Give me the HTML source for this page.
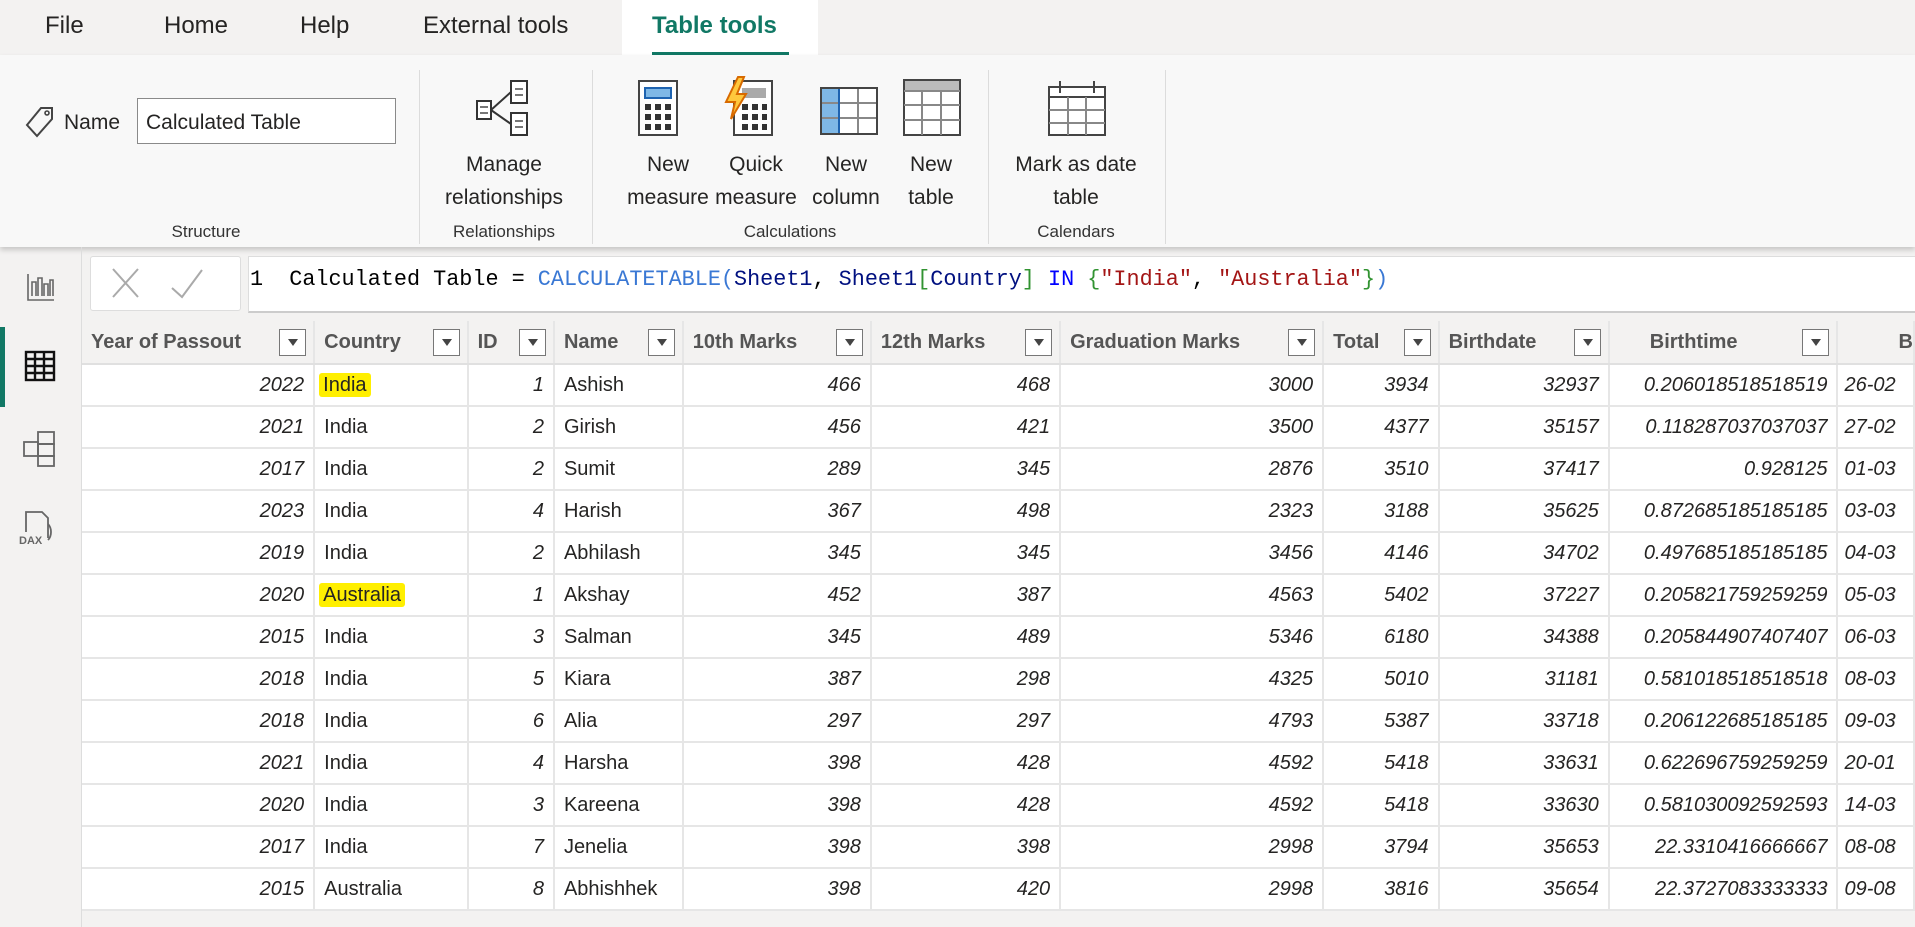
<!DOCTYPE html>
<html><head><meta charset="utf-8"><style>
*{box-sizing:border-box;margin:0;padding:0}
body{width:1915px;height:927px;overflow:hidden;background:#f3f2f1;font-family:"Liberation Sans",sans-serif;color:#252423;position:relative}
.a{position:absolute}
.tab{position:absolute;top:12px;font-size:24px;color:#252423}
.ribbon{position:absolute;left:0;top:55px;width:1915px;height:192px;background:#f8f8f8;box-shadow:0 3px 5px rgba(0,0,0,.18)}
.sep{position:absolute;top:70px;width:1px;height:174px;background:#dcdcdc}
.glabel{position:absolute;top:222px;font-size:17px;color:#333;transform:translateX(-50%);white-space:nowrap}
.blabel{position:absolute;top:148px;font-size:21px;line-height:33px;text-align:center;transform:translateX(-50%);white-space:nowrap;color:#252423}
table{position:absolute;left:82px;top:321px;border-collapse:collapse;table-layout:fixed;background:#fff}
th{height:43px;background:#f3f2f1;font-weight:bold;font-size:20px;color:#555;text-align:left;padding-left:9px;border-right:2px solid #e6e6e6;border-bottom:2px solid #e0e0e0;position:relative;white-space:nowrap;overflow:hidden}
th .dd{position:absolute;right:7px;top:8px;width:27px;height:27px;border:1.5px solid #777;background:#fff}
th .dd:after{content:"";position:absolute;left:8px;top:9px;border-left:5px solid transparent;border-right:5px solid transparent;border-top:7px solid #444}
td{height:42px;font-size:20px;border-right:2px solid #e6e6e6;border-bottom:2px solid #e6e6e6;padding:0 9px;white-space:nowrap;overflow:hidden;color:#252423}
td.n{text-align:right;font-style:italic}
.hl{background:#ffef00;padding:1px 4px;margin-left:-5px;border-radius:3px}
</style></head><body>
<div class="a" style="left:622px;top:0;width:196px;height:55px;background:#fff"></div>
<div class="tab" style="left:45px">File</div>
<div class="tab" style="left:164px">Home</div>
<div class="tab" style="left:300px">Help</div>
<div class="tab" style="left:423px">External tools</div>
<div class="tab" style="left:652px;color:#117865;font-weight:bold">Table tools</div>
<div class="a" style="left:652px;top:52px;width:137px;height:4px;background:#117865"></div>
<div class="ribbon"></div>
<svg class="a" style="left:24px;top:105px" width="32" height="34" viewBox="0 0 32 34"><path d="M3 20 L17 3 L28 3 L28 14 L13 31 Z" fill="none" stroke="#444" stroke-width="2"/><circle cx="23" cy="8" r="2" fill="none" stroke="#444" stroke-width="1.6"/></svg>
<div class="a" style="left:64px;top:111px;font-size:21px">Name</div>
<div class="a" style="left:137px;top:98px;width:259px;height:46px;background:#fff;border:1.5px solid #8a8a8a;font-size:21px;padding:12px 8px">Calculated Table</div>
<div class="sep" style="left:419px"></div><div class="sep" style="left:592px"></div><div class="sep" style="left:988px"></div><div class="sep" style="left:1165px"></div>
<!-- icons -->
<svg class="a" style="left:475px;top:79px" width="62" height="58" viewBox="0 0 62 58"><g fill="#fff" stroke="#333" stroke-width="2"><rect x="2" y="22" width="14" height="18"/><rect x="36" y="2" width="16" height="22"/><rect x="36" y="34" width="16" height="22"/></g><path d="M16 31 L36 13 M16 31 L36 45" stroke="#333" stroke-width="2"/><g stroke="#777" stroke-width="2"><path d="M5 28h8M5 34h8M40 10h8M40 16h8M40 42h8M40 48h8"/></g></svg>
<svg class="a" style="left:638px;top:80px" width="40" height="56" viewBox="0 0 40 56"><rect x="1" y="1" width="38" height="54" fill="#fff" stroke="#444" stroke-width="2"/><rect x="7" y="8" width="26" height="10" fill="#7fb8e6" stroke="#1e63b0" stroke-width="2"/><g fill="#333"><rect x="7" y="24" width="6" height="6"/><rect x="17" y="24" width="6" height="6"/><rect x="27" y="24" width="6" height="6"/><rect x="7" y="34" width="6" height="6"/><rect x="17" y="34" width="6" height="6"/><rect x="27" y="34" width="6" height="6"/><rect x="7" y="44" width="6" height="6"/><rect x="17" y="44" width="6" height="6"/><rect x="27" y="44" width="6" height="6"/></g></svg>
<svg class="a" style="left:722px;top:76px" width="52" height="60" viewBox="0 0 52 60"><rect x="12" y="5" width="38" height="54" fill="#fff" stroke="#444" stroke-width="2"/><rect x="20" y="12" width="24" height="10" fill="#aaa"/><g fill="#333"><rect x="20" y="28" width="6" height="6"/><rect x="30" y="28" width="6" height="6"/><rect x="40" y="28" width="5" height="6"/><rect x="20" y="38" width="6" height="6"/><rect x="30" y="38" width="6" height="6"/><rect x="40" y="38" width="5" height="6"/><rect x="20" y="48" width="6" height="6"/><rect x="30" y="48" width="6" height="6"/><rect x="40" y="48" width="5" height="6"/></g><path d="M16 1 L4 26 L13 26 L9 43 L24 18 L15 18 L22 1 Z" fill="#ffc83d" stroke="#d86a00" stroke-width="2"/></svg>
<svg class="a" style="left:820px;top:87px" width="58" height="48" viewBox="0 0 58 48"><rect x="1" y="1" width="56" height="46" fill="#fff" stroke="#444" stroke-width="2"/><rect x="2" y="2" width="17" height="44" fill="#7fb8e6"/><path d="M19 1v46M38 1v46M1 16h56M1 31h56" stroke="#888" stroke-width="2"/><path d="M19 1v46" stroke="#1e63b0" stroke-width="2"/><rect x="1" y="1" width="56" height="46" fill="none" stroke="#444" stroke-width="2"/></svg>
<svg class="a" style="left:903px;top:79px" width="58" height="57" viewBox="0 0 58 57"><rect x="1" y="1" width="56" height="55" fill="#fff" stroke="#444" stroke-width="2"/><rect x="2" y="2" width="54" height="9" fill="#bbb"/><path d="M1 12h56M19 12v44M38 12v44M1 26h56M1 41h56" stroke="#888" stroke-width="2"/></svg>
<svg class="a" style="left:1048px;top:79px" width="58" height="57" viewBox="0 0 58 57"><rect x="1" y="8" width="56" height="48" fill="#fff" stroke="#444" stroke-width="2"/><path d="M1 18h56" stroke="#444" stroke-width="2"/><path d="M12 2v12M46 2v12" stroke="#444" stroke-width="2"/><path d="M20 18v38M38 18v38M1 31h56M1 44h56" stroke="#888" stroke-width="2"/></svg>
<div class="blabel" style="left:504px">Manage<br>relationships</div>
<div class="blabel" style="left:668px">New<br>measure</div>
<div class="blabel" style="left:756px">Quick<br>measure</div>
<div class="blabel" style="left:846px">New<br>column</div>
<div class="blabel" style="left:931px">New<br>table</div>
<div class="blabel" style="left:1076px">Mark as date<br>table</div>
<div class="glabel" style="left:206px">Structure</div>
<div class="glabel" style="left:504px">Relationships</div>
<div class="glabel" style="left:790px">Calculations</div>
<div class="glabel" style="left:1076px">Calendars</div>
<!-- sidebar -->
<div class="a" style="left:81px;top:247px;width:1px;height:680px;background:#ddd"></div>
<div class="a" style="left:0;top:327px;width:5px;height:80px;background:#117865"></div>
<svg class="a" style="left:26px;top:272px" width="30" height="30" viewBox="0 0 30 30"><path d="M2 2v26h26M6 24V10h4v14M12 24V6h4v18M18 24V12h4v12M24 24V8h3v16" fill="none" stroke="#666" stroke-width="1.6"/></svg>
<svg class="a" style="left:24px;top:350px" width="32" height="32" viewBox="0 0 32 32"><rect x="2" y="2" width="28" height="28" fill="none" stroke="#111" stroke-width="2.4"/><path d="M2 9h28M2 16h28M2 23h28M11 2v28M20 2v28" stroke="#111" stroke-width="2.4"/></svg>
<svg class="a" style="left:22px;top:430px" width="36" height="38" viewBox="0 0 36 38"><g fill="none" stroke="#666" stroke-width="1.8"><rect x="2" y="12" width="14" height="14"/><rect x="16" y="2" width="16" height="12"/><rect x="16" y="14" width="16" height="12"/><rect x="16" y="26" width="16" height="10"/></g></svg>
<svg class="a" style="left:18px;top:510px" width="40" height="38" viewBox="0 0 40 38"><path d="M8 22V2h16l6 6v20" fill="none" stroke="#666" stroke-width="1.8"/><path d="M30 14c4 4 4 12 0 16" fill="none" stroke="#666" stroke-width="1.8"/><text x="1" y="34" font-family="Liberation Sans" font-size="11" font-weight="bold" fill="#666">DAX</text></svg>
<!-- formula bar -->
<div class="a" style="left:90px;top:256px;width:151px;height:55px;background:#fff;border:1.5px solid #ddd;border-radius:3px"></div>
<svg class="a" style="left:110px;top:266px" width="105" height="36" viewBox="0 0 105 36"><path d="M3 3L28 31M28 3L3 31" stroke="#aaa" stroke-width="2"/><path d="M62 22L72 31L92 4" fill="none" stroke="#aaa" stroke-width="2"/></svg>
<div class="a" style="left:248px;top:256px;width:1667px;height:57px;background:#fff;border-top:1.5px solid #ddd;border-left:1.5px solid #ddd;border-bottom:2px solid #ccc"></div>
<div class="a" style="left:250px;top:267px;font-family:'Liberation Mono',monospace;font-size:21.8px;white-space:pre;color:#000">1  Calculated Table = <span style="color:#3a78d4">CALCULATETABLE</span><span style="color:#3a78d4">(</span><span style="color:#001080">Sheet1</span>, <span style="color:#001080">Sheet1</span><span style="color:#319331">[</span><span style="color:#001080">Country</span><span style="color:#319331">]</span> <span style="color:#0000ff">IN</span> <span style="color:#319331">{</span><span style="color:#a31515">"India"</span>, <span style="color:#a31515">"Australia"</span><span style="color:#319331">}</span><span style="color:#3a78d4">)</span></div>
<!-- table -->
<table>
<colgroup><col style="width:233px"><col style="width:154px"><col style="width:87px"><col style="width:129px"><col style="width:189px"><col style="width:190px"><col style="width:264px"><col style="width:116px"><col style="width:171px"><col style="width:229px"><col style="width:71px"></colgroup>
<tr><th>Year of Passout<span class="dd"></span></th><th>Country<span class="dd"></span></th><th>ID<span class="dd"></span></th><th>Name<span class="dd"></span></th><th>10th Marks<span class="dd"></span></th><th>12th Marks<span class="dd"></span></th><th>Graduation Marks<span class="dd"></span></th><th>Total<span class="dd"></span></th><th>Birthdate<span class="dd"></span></th><th style="padding-left:40px">Birthtime<span class="dd"></span></th><th style="padding-left:60px">B</th></tr>
<tr><td class="n">2022</td><td><span class="hl">India</span></td><td class="n">1</td><td>Ashish</td><td class="n">466</td><td class="n">468</td><td class="n">3000</td><td class="n">3934</td><td class="n">32937</td><td class="n">0.206018518518519</td><td class="n" style="text-align:left;padding-left:6px">26-02</td></tr>
<tr><td class="n">2021</td><td>India</td><td class="n">2</td><td>Girish</td><td class="n">456</td><td class="n">421</td><td class="n">3500</td><td class="n">4377</td><td class="n">35157</td><td class="n">0.118287037037037</td><td class="n" style="text-align:left;padding-left:6px">27-02</td></tr>
<tr><td class="n">2017</td><td>India</td><td class="n">2</td><td>Sumit</td><td class="n">289</td><td class="n">345</td><td class="n">2876</td><td class="n">3510</td><td class="n">37417</td><td class="n">0.928125</td><td class="n" style="text-align:left;padding-left:6px">01-03</td></tr>
<tr><td class="n">2023</td><td>India</td><td class="n">4</td><td>Harish</td><td class="n">367</td><td class="n">498</td><td class="n">2323</td><td class="n">3188</td><td class="n">35625</td><td class="n">0.872685185185185</td><td class="n" style="text-align:left;padding-left:6px">03-03</td></tr>
<tr><td class="n">2019</td><td>India</td><td class="n">2</td><td>Abhilash</td><td class="n">345</td><td class="n">345</td><td class="n">3456</td><td class="n">4146</td><td class="n">34702</td><td class="n">0.497685185185185</td><td class="n" style="text-align:left;padding-left:6px">04-03</td></tr>
<tr><td class="n">2020</td><td><span class="hl">Australia</span></td><td class="n">1</td><td>Akshay</td><td class="n">452</td><td class="n">387</td><td class="n">4563</td><td class="n">5402</td><td class="n">37227</td><td class="n">0.205821759259259</td><td class="n" style="text-align:left;padding-left:6px">05-03</td></tr>
<tr><td class="n">2015</td><td>India</td><td class="n">3</td><td>Salman</td><td class="n">345</td><td class="n">489</td><td class="n">5346</td><td class="n">6180</td><td class="n">34388</td><td class="n">0.205844907407407</td><td class="n" style="text-align:left;padding-left:6px">06-03</td></tr>
<tr><td class="n">2018</td><td>India</td><td class="n">5</td><td>Kiara</td><td class="n">387</td><td class="n">298</td><td class="n">4325</td><td class="n">5010</td><td class="n">31181</td><td class="n">0.581018518518518</td><td class="n" style="text-align:left;padding-left:6px">08-03</td></tr>
<tr><td class="n">2018</td><td>India</td><td class="n">6</td><td>Alia</td><td class="n">297</td><td class="n">297</td><td class="n">4793</td><td class="n">5387</td><td class="n">33718</td><td class="n">0.206122685185185</td><td class="n" style="text-align:left;padding-left:6px">09-03</td></tr>
<tr><td class="n">2021</td><td>India</td><td class="n">4</td><td>Harsha</td><td class="n">398</td><td class="n">428</td><td class="n">4592</td><td class="n">5418</td><td class="n">33631</td><td class="n">0.622696759259259</td><td class="n" style="text-align:left;padding-left:6px">20-01</td></tr>
<tr><td class="n">2020</td><td>India</td><td class="n">3</td><td>Kareena</td><td class="n">398</td><td class="n">428</td><td class="n">4592</td><td class="n">5418</td><td class="n">33630</td><td class="n">0.581030092592593</td><td class="n" style="text-align:left;padding-left:6px">14-03</td></tr>
<tr><td class="n">2017</td><td>India</td><td class="n">7</td><td>Jenelia</td><td class="n">398</td><td class="n">398</td><td class="n">2998</td><td class="n">3794</td><td class="n">35653</td><td class="n">22.3310416666667</td><td class="n" style="text-align:left;padding-left:6px">08-08</td></tr>
<tr><td class="n">2015</td><td>Australia</td><td class="n">8</td><td>Abhishhek</td><td class="n">398</td><td class="n">420</td><td class="n">2998</td><td class="n">3816</td><td class="n">35654</td><td class="n">22.3727083333333</td><td class="n" style="text-align:left;padding-left:6px">09-08</td></tr>
</table>
</body></html>
